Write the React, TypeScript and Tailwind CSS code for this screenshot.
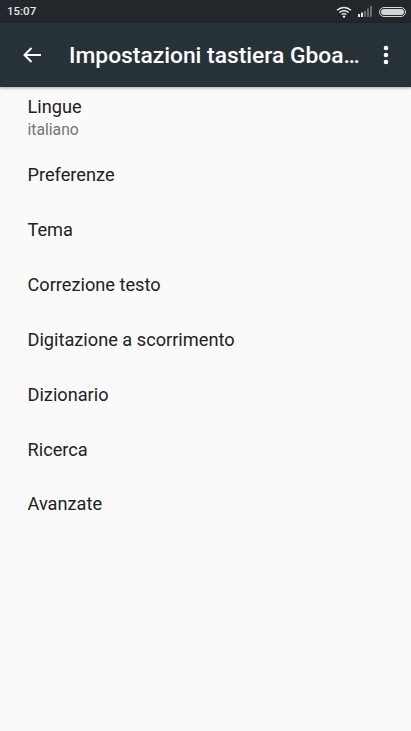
const items = ["Preferenze", "Tema", "Correzione testo", "Digitazione a scorrimento", "Dizionario", "Ricerca", "Avanzate"];

function StatusBar() {
  return (
    <div className="flex h-[23px] items-center justify-between bg-[#21272b] pl-[7px] pr-[5px]">
      <span className="text-[11.5px] font-medium text-[#e6e8e9]">15:07</span>
      <div className="flex items-center">
        <svg width="16" height="12" viewBox="0 0 16 12" className="mr-[6px]">
          <path d="M1 4.2 C5 0.6 11 0.6 15 4.2" fill="none" stroke="#f2f2f2" strokeWidth="1.3" />
          <path d="M3.4 6.4 C6 4.2 10 4.2 12.6 6.4" fill="none" stroke="#f2f2f2" strokeWidth="1.3" />
          <path d="M5.6 8.6 C7 7.5 9 7.5 10.4 8.6" fill="none" stroke="#f2f2f2" strokeWidth="1.3" />
          <circle cx="8" cy="10.6" r="1.2" fill="#f2f2f2" />
        </svg>
        <svg width="15" height="11" viewBox="0 0 15 11" className="mr-[6px]">
          <rect x="0" y="8" width="2" height="3" fill="#e8e8e8" />
          <rect x="3" y="6.5" width="2" height="4.5" fill="#e8e8e8" />
          <rect x="6" y="5" width="2" height="6" fill="#6a6f72" />
          <rect x="9" y="2.5" width="2" height="8.5" fill="#6a6f72" />
          <rect x="12" y="0" width="2" height="11" fill="#6a6f72" />
        </svg>
        <div className="h-[10px] w-[27px] rounded-[5px] border border-[#d8d8d8] p-[1px]">
          <div className="h-full w-full rounded-[3px] bg-[#d4d4d4]" />
        </div>
      </div>
    </div>
  );
}

function AppBar() {
  return (
    <div className="relative z-10 flex h-[64px] items-center bg-[#263238] shadow-[0_1px_3px_rgba(0,0,0,0.35)]">
      <svg width="20" height="18" viewBox="0 0 20 18" className="ml-[22px] shrink-0">
        <path d="M19 9 H2.5 M9.5 2 L2.5 9 L9.5 16" fill="none" stroke="#ffffff" strokeWidth="2" />
      </svg>
      <h1 className="ml-[27px] min-w-0 flex-1 whitespace-nowrap pt-[2px] text-[22.8px] font-medium text-white">Impostazioni tastiera Gboa…</h1>
      <svg width="6" height="20" viewBox="0 0 6 20" className="ml-[15px] mr-[22px] shrink-0">
        <circle cx="3" cy="3" r="2.3" fill="#ffffff" />
        <circle cx="3" cy="10" r="2.3" fill="#ffffff" />
        <circle cx="3" cy="17" r="2.3" fill="#ffffff" />
      </svg>
    </div>
  );
}

export default function App() {
  return (
    <div className="flex h-[731px] w-[411px] flex-col overflow-hidden bg-[#fafafa] font-['Roboto',sans-serif]">
      <StatusBar />
      <AppBar />
      <div className="pl-[27.5px]">
        <div className="flex h-[60px] flex-col pt-[8px]">
          <span className="text-[18.2px] leading-[24px] text-[#212121]">Lingue</span>
          <span className="text-[15.7px] leading-[22px] text-[#757575]">italiano</span>
        </div>
        {items.map((item) => (
          <div key={item} className="flex h-[54.95px] items-center text-[18.2px] text-[#212121]">
            {item}
          </div>
        ))}
      </div>
    </div>
  );
}
